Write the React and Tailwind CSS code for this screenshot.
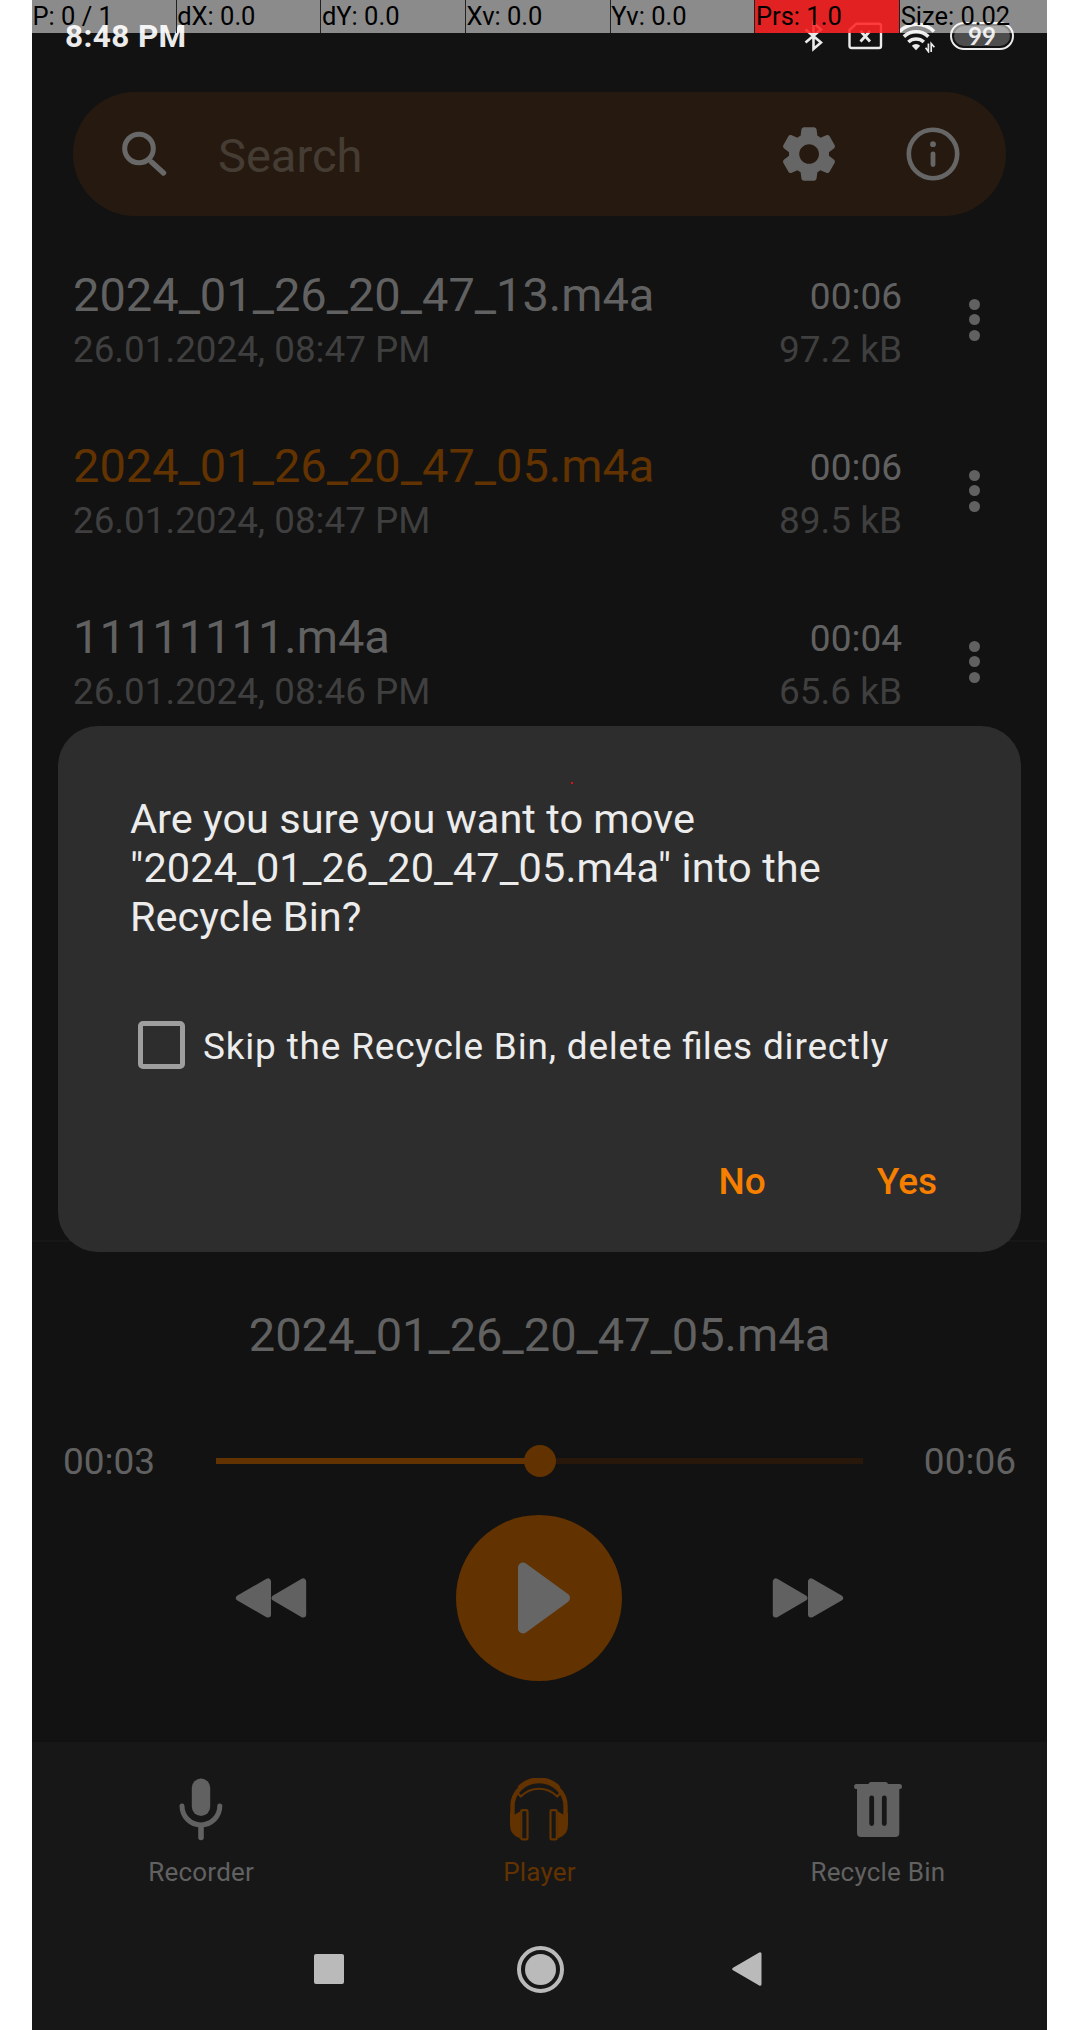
import React from "react";

const POINTER_CELLS = [
  { text: "P: 0 / 1", cls: "bg-white/51" },
  { text: "dX: 0.0", cls: "bg-white/51" },
  { text: "dY: 0.0", cls: "bg-white/51" },
  { text: "Xv: 0.0", cls: "bg-white/51" },
  { text: "Yv: 0.0", cls: "bg-white/51" },
  { text: "Prs: 1.0", cls: "bg-[#ff2424]/88" },
  { text: "Size: 0.02", cls: "bg-white/51" },
];

const RECORDINGS = [
  { name: "2024_01_26_20_47_13.m4a", date: "26.01.2024, 08:47 PM", duration: "00:06", size: "97.2 kB" },
  { name: "2024_01_26_20_47_05.m4a", date: "26.01.2024, 08:47 PM", duration: "00:06", size: "89.5 kB", active: true },
  { name: "11111111.m4a", date: "26.01.2024, 08:46 PM", duration: "00:04", size: "65.6 kB" },
];

function BluetoothIcon() {
  return (
    <svg width="22" height="32" viewBox="0 0 22 32" fill="none" stroke="#ebebeb" strokeWidth="2.6" strokeLinejoin="miter">
      <path d="M1.5 9.5 L17 22.5 L9.5 29 V3 L17 9.5 L1.5 22.5" />
    </svg>
  );
}

function NoSimIcon() {
  return (
    <svg width="35" height="28" viewBox="0 0 35 28" fill="none" stroke="#ebebeb" strokeWidth="2.4" strokeLinejoin="round">
      <path d="M8.5 1.7 H31 Q33 1.7 33 3.7 V24 Q33 26 31 26 H3.5 Q1.5 26 1.5 24 V8 Z" />
      <path d="M12.5 9 L22 19.5 M22 9 L12.5 19.5" strokeWidth="2.8" />
    </svg>
  );
}

function WifiIcon() {
  return (
    <svg width="38" height="31" viewBox="0 0 38 31" fill="none" stroke="#ebebeb" strokeWidth="3.6">
      <path d="M1.6 9.5 A24 24 0 0 1 36 9.5" />
      <path d="M5.9 14.6 A18 18 0 0 1 30.4 14.6" />
      <path d="M10.4 20 A11.5 11.5 0 0 1 25.8 20" />
      <path d="M18 28.2 L13.8 23.7 A6.3 6.3 0 0 1 22.2 23.7 Z" fill="#ebebeb" stroke="none" />
      <path d="M30.4 21.5 V29.5 L27.6 25.8 M33.2 30 V21.5 L36.4 25.2" strokeWidth="1.7" />
    </svg>
  );
}

function SearchIcon() {
  return (
    <svg width="46" height="46" viewBox="0 0 46 46" fill="none" stroke="#686868" strokeLinecap="round">
      <circle cx="17" cy="17.5" r="14.3" strokeWidth="5" />
      <path d="M29.5 31 L41.5 42" strokeWidth="5.4" />
    </svg>
  );
}

function GearIcon() {
  return (
    <svg width="64" height="64" viewBox="0 0 24 24" fill="#666666">
      <path d="M19.5 12c0-.23-.01-.45-.03-.68l1.86-1.41c.4-.3.51-.86.26-1.3l-1.87-3.23a.987.987 0 0 0-1.25-.42l-2.15.91c-.37-.26-.76-.49-1.17-.68l-.29-2.31c-.06-.5-.49-.88-.99-.88h-3.73c-.51 0-.94.38-1 .88l-.29 2.31c-.41.19-.8.42-1.17.68l-2.15-.91c-.46-.2-1-.02-1.25.42L2.41 8.62c-.25.44-.14.99.26 1.3l1.86 1.41a7.343 7.343 0 0 0 0 1.35l-1.86 1.41c-.4.3-.51.86-.26 1.3l1.87 3.23c.25.44.79.62 1.25.42l2.15-.91c.37.26.76.49 1.17.68l.29 2.31c.06.5.49.88.99.88h3.73c.5 0 .93-.38.99-.88l.29-2.31c.41-.19.8-.42 1.17-.68l2.15.91c.46.2 1 .02 1.25-.42l1.87-3.23c.25-.44.14-.99-.26-1.3l-1.86-1.41c.03-.23.04-.45.04-.68zM12.04 15.7c-2.03 0-3.7-1.66-3.7-3.7s1.67-3.7 3.7-3.7 3.7 1.66 3.7 3.7-1.67 3.7-3.7 3.7z" />
    </svg>
  );
}

function InfoIcon() {
  return (
    <svg width="54" height="54" viewBox="0 0 54 54" fill="none" stroke="#666666" strokeLinecap="round">
      <circle cx="27" cy="27" r="24.2" strokeWidth="4.6" />
      <path d="M27 26.8 V37.6" strokeWidth="4.8" />
      <circle cx="27" cy="17.2" r="2.9" fill="#666666" stroke="none" />
    </svg>
  );
}

function RewindIcon() {
  return (
    <svg width="72" height="42" viewBox="0 0 72 42" fill="#616161" stroke="#616161" strokeWidth="6" strokeLinejoin="round">
      <path d="M3.9 21 L33 4.4 V37.6 Z" />
      <path d="M39.6 21 L68.2 4.4 V37.6 Z" />
    </svg>
  );
}

function PlayIcon() {
  return (
    <svg width="56" height="76" viewBox="0 0 56 76" fill="#666666" stroke="#666666" strokeWidth="10" strokeLinejoin="round">
      <path d="M7 7.5 V68.5 L49 38 Z" />
    </svg>
  );
}

function MicIcon() {
  return (
    <svg width="44" height="64" viewBox="0 0 44 64" fill="none" stroke="#616161" strokeLinecap="round">
      <rect x="12.8" y="0.5" width="18.4" height="37.5" rx="9.2" fill="#616161" stroke="none" />
      <path d="M3 28 A18.9 18.9 0 0 0 40.8 28" strokeWidth="5" />
      <path d="M22 48 V59.5" strokeWidth="5.6" />
    </svg>
  );
}

function HeadphonesIcon() {
  return (
    <svg width="60" height="64" viewBox="0 0 60 64" fill="none" stroke="#623200">
      <path d="M3.5 38 V28 A26.5 25 0 0 1 56.5 28 V38" strokeWidth="4.4" />
      <path d="M10 16.5 A26.5 25 0 0 1 50 16.5" strokeWidth="4" transform="translate(0 -6.5)" />
      <path d="M8.6 15 L11.8 18.6 A25 25 0 0 1 48.2 18.6 L51.4 15" strokeWidth="2.2" strokeLinejoin="round" />
      <path d="M1 34 L4 37.6 L11 33.5 V60.5 Q1 57 1 47 Z M59 34 L56 37.6 L49 33.5 V60.5 Q59 57 59 47 Z" fill="#623200" stroke="none" />
      <rect x="12.2" y="32.2" width="6.3" height="29.2" rx="1.2" strokeWidth="2.2" />
      <rect x="41.5" y="32.2" width="6.3" height="29.2" rx="1.2" strokeWidth="2.2" />
    </svg>
  );
}

function TrashIcon() {
  return (
    <svg width="48" height="64" viewBox="0 0 48 64" fill="#616161">
      <path d="M14.5 6 Q15 4 17 4 H31.5 Q33.5 4 34 6 H46 Q48 6 48 8.5 Q48 11 46 11 H45.3 V55 Q45.3 59 41.3 59 H7 Q3 59 3 55 V11 H2 Q0 11 0 8.5 Q0 6 2 6 Z" />
      <path d="M17.7 20 V45.5 M30.3 20 V45.5" stroke="#171717" strokeWidth="4.8" strokeLinecap="round" />
    </svg>
  );
}

function StatusBar() {
  return (
    <div className="flex h-[92px] items-start justify-between pr-[33px] pl-[33px]">
      <span className="mt-[18px] text-[31.5px] leading-[38px] font-bold tracking-[0.4px] text-[#ebebeb]">8:48 PM</span>
      <div className="flex items-start">
        <span className="mt-5 mr-[22px]"><BluetoothIcon /></span>
        <span className="mt-[22px] mr-[15px]"><NoSimIcon /></span>
        <span className="mt-[22px] mr-[14px]"><WifiIcon /></span>
        <span className="mt-[22px] flex h-[28px] w-[64px] items-center justify-center rounded-full border-[2.5px] border-[#ebebeb] bg-[#121212] p-[2px]">
          <span className="flex h-full w-full items-center justify-center rounded-full bg-[#4d4d4d] font-['Lato'] text-[24px] leading-none font-bold text-[#ebebeb]">99</span>
        </span>
      </div>
    </div>
  );
}

function PointerBar() {
  return (
    <div className="absolute inset-x-0 top-0 flex h-[33px] overflow-hidden">
      {POINTER_CELLS.map((c, i) => (
        <div key={c.text} className={`h-full w-[144.7px] shrink-0 whitespace-nowrap pt-px pl-[0.5px] text-[25.5px] leading-[31px] text-black ${c.cls} ${i < 6 ? "border-r border-[#222222]" : "flex-1"}`}>
          {c.text}
        </div>
      ))}
    </div>
  );
}

function SearchBar() {
  return (
    <div className="mx-[41px] flex h-[124px] shrink-0 items-center rounded-full bg-[#261a10] pl-[49px]">
      <SearchIcon />
      <span className="mt-1 ml-[50px] flex-1 text-[47px] leading-[56px] text-[#453c34]">Search</span>
      <span className="mr-[65px]"><GearIcon /></span>
      <span className="mr-[46px]"><InfoIcon /></span>
    </div>
  );
}

function RecordingRow({ item }) {
  return (
    <div className="flex h-[171px] items-center pr-[67px] pl-[41px]">
      <div className="flex flex-1 flex-col gap-[5px]">
        <span className={`text-[47px] leading-[56px] ${item.active ? "text-[#623200]" : "text-[#616161]"}`}>{item.name}</span>
        <span className="text-[36.8px] leading-[44px] text-[#3f3f3f]">{item.date}</span>
      </div>
      <div className="flex flex-col items-end gap-[9px] self-center pt-[7px]">
        <span className="text-[37px] leading-[44px] text-[#616161]">{item.duration}</span>
        <span className="text-[37px] leading-[44px] text-[#3f3f3f]">{item.size}</span>
      </div>
      <div className="ml-[67px] flex w-[11px] flex-col gap-[4.5px]">
        <i className="h-[11px] w-[11px] rounded-full bg-[#616161]" />
        <i className="h-[11px] w-[11px] rounded-full bg-[#616161]" />
        <i className="h-[11px] w-[11px] rounded-full bg-[#616161]" />
      </div>
    </div>
  );
}

function Player() {
  const progress = 50;
  return (
    <div className="flex h-[502px] flex-col border-t-2 border-[#171717]">
      <div className="mt-[65px] text-center text-[47px] leading-[56px] text-[#616161]">2024_01_26_20_47_05.m4a</div>
      <div className="mt-[77px] flex h-[44px] items-center justify-between pr-[31px] pl-[31px] text-[37px] leading-[44px] text-[#616161]">
        <span>00:03</span>
        <div className="relative -mt-[3px] h-[6px] w-[647px] bg-[#27180b]">
          <div className="h-full bg-[#623200]" style={{ width: `${progress}%` }} />
          <div className="absolute top-1/2 left-1/2 h-[32px] w-[32px] -translate-1/2 rounded-full bg-[#623200]" />
        </div>
        <span>00:06</span>
      </div>
      <div className="mt-[31px] flex items-center justify-center">
        <RewindIcon />
        <div className="mr-[150px] ml-[149px] flex h-[166px] w-[166px] items-center justify-center rounded-full bg-[#623200] pl-[10px]">
          <PlayIcon />
        </div>
        <span className="-scale-x-100"><RewindIcon /></span>
      </div>
    </div>
  );
}

function TabItem({ icon, label, active }) {
  return (
    <div className={`flex flex-1 flex-col items-center pt-[36px] text-[26px] leading-[32px] tracking-[0.2px] ${active ? "text-[#623200]" : "text-[#616161]"}`}>
      {icon}
      <span className="mt-[14px]">{label}</span>
    </div>
  );
}

function SystemNav() {
  return (
    <div className="flex h-[122px] shrink-0 items-center justify-center bg-[#171717] pr-[3px]">
      <div className="h-[30px] w-[30px] rounded-[2px] bg-[#bababa]" />
      <div className="mr-[168px] ml-[173px] flex h-[47px] w-[47px] items-center justify-center rounded-full border-4 border-[#bababa]">
        <div className="h-[31px] w-[31px] rounded-full bg-[#bababa]" />
      </div>
      <svg width="30" height="34" viewBox="0 0 30 34" fill="#bababa" stroke="#bababa" strokeWidth="3" strokeLinejoin="round">
        <path d="M1.8 17 L28 1.8 V32.2 Z" />
      </svg>
    </div>
  );
}

function Dialog() {
  return (
    <div className="absolute top-[726px] left-[26px] flex h-[526px] w-[963px] flex-col rounded-[40px] bg-[#2d2d2d] text-[#ececec]">
      <div className="absolute top-[56px] left-[513px] h-[2px] w-[2px] bg-[#e01010]" />
      <p className="mt-[68px] ml-[72px] text-[41.5px] leading-[49px] whitespace-nowrap">
        Are you sure you want to move<br />
        <span className="tracking-[0.1px]">&quot;2024_01_26_20_47_05.m4a&quot; into the</span><br />
        Recycle Bin?
      </p>
      <div className="mt-[80px] ml-[80px] flex h-[48px] items-center">
        <div className="h-[48px] w-[47px] rounded-[5px] border-5 border-[#9e9e9e]" />
        <span className="mt-1 ml-[18px] text-[37px] leading-[48px] tracking-[0.8px] whitespace-nowrap">
          Skip the Recycle Bin, delete <span className="tracking-normal">fi</span>les directly
        </span>
      </div>
      <div className="mt-[91px] flex justify-end pr-[84px] text-[37px] leading-[44px] font-medium text-[#f77f00]">
        <span className="mr-[111px]">No</span>
        <span>Yes</span>
      </div>
    </div>
  );
}

export default function App() {
  return (
    <div className="h-[2030px] w-[1088px] bg-white pl-[32px] font-['Roboto',sans-serif]">
      <div className="relative flex h-[2030px] w-[1015px] flex-col overflow-hidden bg-[#121212]">
        <StatusBar />
        <SearchBar />
        <div className="flex flex-1 flex-col pt-[18px]">
          {RECORDINGS.map((item) => (
            <RecordingRow key={item.name} item={item} />
          ))}
        </div>
        <Player />
        <div className="flex h-[166px] shrink-0 bg-[#171717]">
          <TabItem icon={<MicIcon />} label="Recorder" />
          <TabItem icon={<HeadphonesIcon />} label="Player" active />
          <TabItem icon={<TrashIcon />} label="Recycle Bin" />
        </div>
        <SystemNav />
        <Dialog />
        <PointerBar />
      </div>
    </div>
  );
}
